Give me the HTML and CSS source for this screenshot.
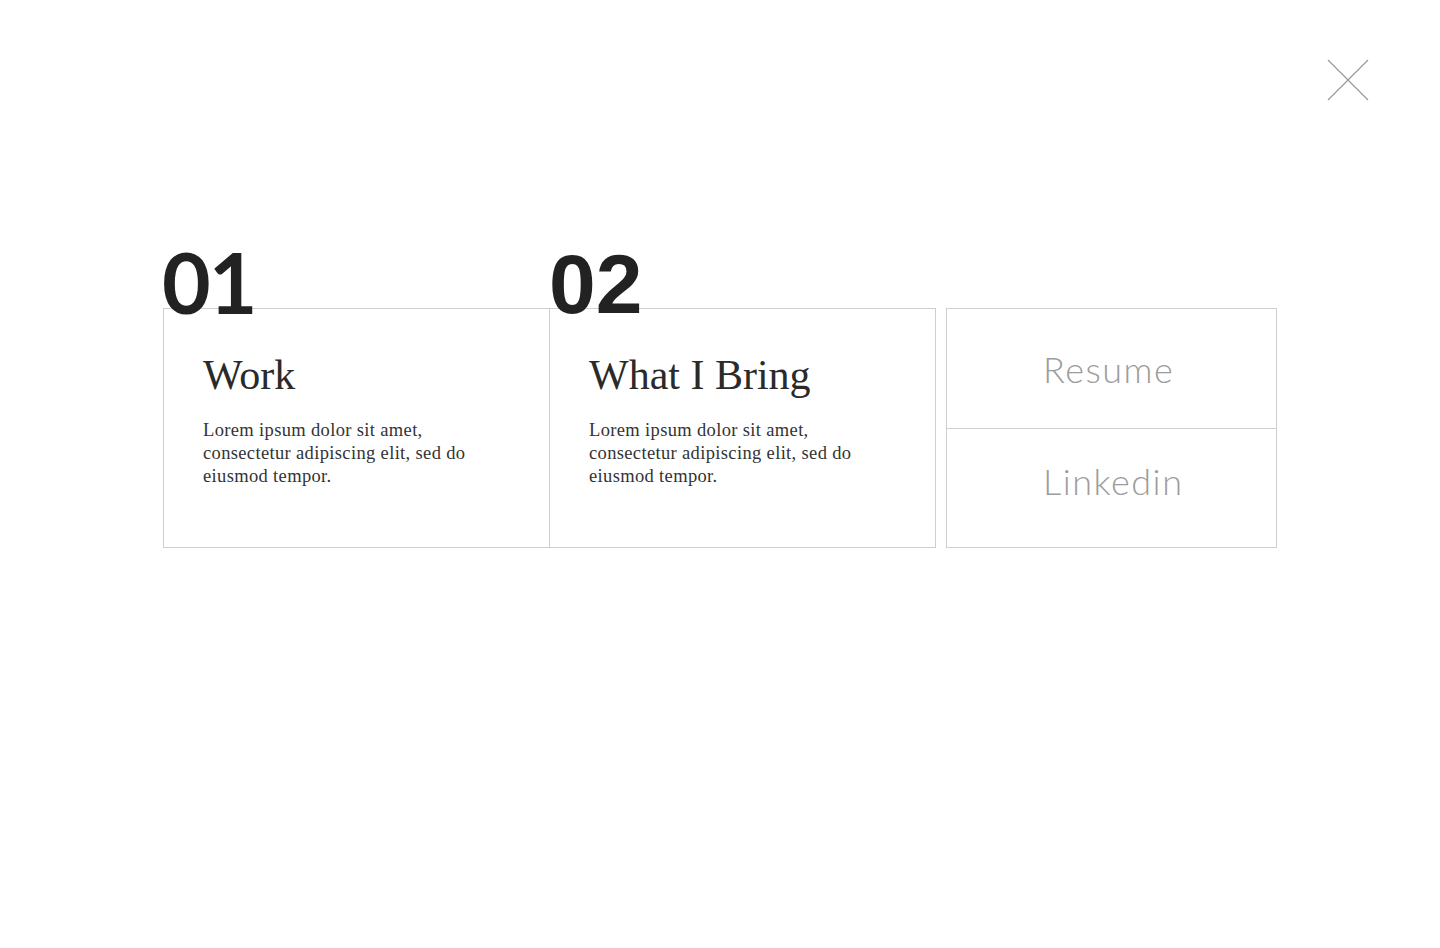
FILE: index.html
```html
<!DOCTYPE html>
<html lang="en">
<head>
<meta charset="utf-8">
<title>Menu</title>
<link rel="stylesheet" href="styles.css">
</head>
<body>
<button class="close" aria-label="Close">
  <svg width="42" height="42" viewBox="0 0 42 42"><path d="M1 1 L41 41 M41 1 L1 41" stroke="#9a9a9a" stroke-width="1.2" fill="none"/></svg>
</button>
<main class="menu">
  <section class="col col-first">
    <div class="num num-lato">01</div>
    <div class="card">
      <h2 class="title">Work</h2>
      <p class="text">Lorem ipsum dolor sit amet, consectetur adipiscing elit, sed do eiusmod tempor.</p>
    </div>
  </section>
  <section class="col col-second">
    <div class="num num-arial">02</div>
    <div class="card">
      <h2 class="title">What I Bring</h2>
      <p class="text">Lorem ipsum dolor sit amet, consectetur adipiscing elit, sed do eiusmod tempor.</p>
    </div>
  </section>
  <nav class="links">
    <a class="link link-resume" href="#">Resume</a>
    <a class="link link-linkedin" href="#">Linkedin</a>
  </nav>
</main>
</body>
</html>
```

FILE: styles.css
```css
html, body {
  margin: 0;
  padding: 0;
  background: #ffffff;
}
body {
  width: 1440px;
  height: 948px;
  position: relative;
  overflow: hidden;
  font-family: "Liberation Serif", serif;
}
.close {
  position: absolute;
  top: 59px;
  left: 1327px;
  width: 42px;
  height: 42px;
  padding: 0;
  border: 0;
  background: none;
  cursor: pointer;
}
.close svg { display: block; }
.menu {
  width: 1114px;
  margin: 0 auto;
  padding-top: 240px;
  display: flex;
  align-items: flex-end;
}
.col { display: flex; flex-direction: column; }
.col-first { width: 387px; }
.col-second { width: 386px; }
.num {
  font-size: 84px;
  line-height: 84px;
  height: 84px;
  margin-bottom: -16px;
  color: #222222;
  font-weight: 700;
  position: relative;
  z-index: 1;
}
.num-lato {
  font-family: "Lato", sans-serif;
  margin-left: -1px;
  letter-spacing: -2px;
}
.num-arial {
  font-family: "Liberation Sans", sans-serif;
  line-height: 88px;
  margin-left: -1px;
}
.card {
  box-sizing: border-box;
  height: 240px;
  border: 1px solid #cfcfcf;
  padding: 41px 40px 0 39px;
}
.col-second .card { border-left: 0; padding-left: 39px; }
.title {
  margin: 0;
  font-family: "Liberation Serif", serif;
  font-weight: 400;
  font-size: 42px;
  line-height: 50px;
  color: #2a2a2a;
}
.text {
  margin: 19px 0 0;
  width: 280px;
  font-size: 18.5px;
  line-height: 23px;
  letter-spacing: 0.35px;
  color: #333333;
}
.links {
  margin-left: 10px;
  width: 331px;
  height: 240px;
  box-sizing: border-box;
  border: 1px solid #cfcfcf;
  display: flex;
  flex-direction: column;
}
.link {
  box-sizing: border-box;
  height: 119px;
  display: block;
  padding-left: 96px;
  font-family: "Lato", sans-serif;
  font-weight: 300;
  font-size: 36px;
  line-height: 44px;
  letter-spacing: 1.5px;
  color: #9c9c9c;
  text-decoration: none;
}
.link-resume { padding-top: 38px; }
.link-linkedin {
  flex: 1;
  padding-top: 30px;
  border-top: 1px solid #cfcfcf;
}
```
